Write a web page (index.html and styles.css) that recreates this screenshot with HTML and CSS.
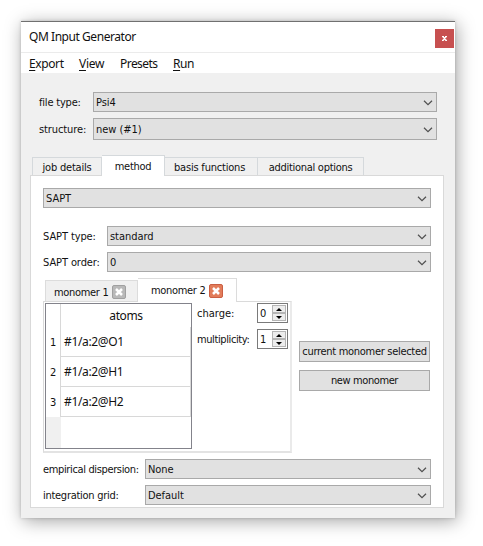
FILE: index.html
```
<!DOCTYPE html>
<html lang="en">
<head>
<meta charset="utf-8">
<title>QM Input Generator</title>
<link rel="stylesheet" href="styles.css">
</head>
<body>
<svg class="defs" width="0" height="0">
  <symbol id="chev" viewBox="0 0 10 6"><path d="M1 .8 5 4.7 9 .8" fill="none" stroke="#505050" stroke-width="1.2"/></symbol>
  <symbol id="cross" viewBox="0 0 14 14"><path d="M4 4 10 10M10 4 4 10" fill="none" stroke="#fff" stroke-width="2.5"/></symbol>
</svg>
<main class="window">
  <header class="titlebar"><h1>QM Input Generator</h1><button class="close" aria-label="Close"><svg width="5" height="5" viewBox="0 0 5 5"><path d="M0 .5H2M3 .5H5M0 4.5H2M3 4.5H5M1 .5 4 4.5M4 .5 1 4.5" fill="none" stroke="#fff" stroke-width="1.3"/></svg></button></header>
  <nav class="menu"><span class="m-export"><u>E</u>xport</span><span class="m-view"><u>V</u>iew</span><span class="m-presets">Presets</span><span class="m-run"><u>R</u>un</span></nav>
  <section class="content">
    <div class="row file"><label>file type:</label><div class="combo"><span>Psi4</span><svg><use href="#chev"/></svg></div></div>
    <div class="row structure"><label>structure:</label><div class="combo"><span>new (#1)</span><svg><use href="#chev"/></svg></div></div>
    <div class="tabs">
      <div class="tab job"><span>job details</span></div><div class="tab active method"><span>method</span></div><div class="tab basis"><span>basis functions</span></div><div class="tab options"><span>additional options</span></div>
    </div>
    <div class="pane">
      <div class="combo sapt"><span>SAPT</span><svg><use href="#chev"/></svg></div>
      <div class="row type"><label>SAPT type:</label><div class="combo"><span>standard</span><svg><use href="#chev"/></svg></div></div>
      <div class="row order"><label>SAPT order:</label><div class="combo"><span>0</span><svg><use href="#chev"/></svg></div></div>
      <div class="monomers">
        <div class="left">
          <div class="mtabs">
            <div class="mtab"><span>monomer 1</span><i class="x"><svg><use href="#cross"/></svg></i></div><div class="mtab current"><span>monomer 2</span><i class="x red"><svg><use href="#cross"/></svg></i></div>
          </div>
          <div class="mpane">
            <div class="table">
              <div class="num"></div><div class="head">atoms</div>
              <div class="num">1</div><div class="cell">#1/a:2@O1</div>
              <div class="num">2</div><div class="cell">#1/a:2@H1</div>
              <div class="num">3</div><div class="cell">#1/a:2@H2</div>
              <div class="num rest"></div><div></div>
            </div>
            <div class="fields">
              <div class="field"><label class="charge">charge:</label><div class="spin"><span>0</span><i><b class="up"></b><b class="down"></b></i></div></div>
              <div class="field"><label class="mult">multiplicity:</label><div class="spin"><span>1</span><i><b class="up"></b><b class="down"></b></i></div></div>
            </div>
          </div>
        </div>
        <div class="buttons"><button><span class="b-current">current monomer selected</span></button><button><span class="b-new">new monomer</span></button></div>
      </div>
      <div class="row disp"><label>empirical dispersion:</label><div class="combo"><span>None</span><svg><use href="#chev"/></svg></div></div>
      <div class="row grid"><label>integration grid:</label><div class="combo"><span>Default</span><svg><use href="#chev"/></svg></div></div>
    </div>
  </section>
</main>
</body>
</html>
```

FILE: styles.css
```
* { box-sizing: border-box; }
body { margin: 0; padding: 21px 0 0 21px; height: 546px; overflow: hidden; background: #fff; color: #111; font: 11px/14px "DejaVu Sans Condensed", "Noto Sans", sans-serif; letter-spacing: -.1px; white-space: nowrap; }
.defs { position: absolute; }
.window { width: 434px; height: 497px; background: #f0f0f0; border-top: 1px solid #707070; box-shadow: 2px 3px 17px rgba(0,0,0,.36), 0 0 3px rgba(0,0,0,.18); }
.titlebar { height: 31px; background: #fff; border-bottom: 1px solid #ebebeb; display: flex; justify-content: space-between; padding: 7px 1px 0 8px; }
h1 { margin: -1px 0 0; height: 17px; font: 12px/17px "Noto Sans", sans-serif; letter-spacing: -.45px; }
.close { width: 19px; height: 19px; border: 0; padding: 0; background: #c75050; display: grid; place-items: center; }
.menu { height: 20px; background: #fff; display: flex; padding-left: 8px; font: 12px/21px "Noto Sans", sans-serif; letter-spacing: -.4px; }
.menu u { text-underline-offset: 2px; text-decoration-skip-ink: none; }
.m-export { width: 50px; }
.m-view { width: 41px; letter-spacing: -.25px; }
.m-presets { width: 53px; letter-spacing: -.55px; }
.content { padding: 19px 11px 0 9px; }
.row { display: flex; align-items: center; }
.row label { padding-top: 2px; }
.file, .structure { padding: 0 7px 0 9px; }
.file label, .structure label { width: 54px; }
.file label { letter-spacing: -.2px; }
.file { height: 20px; margin-bottom: 6px; }
.structure { height: 22px; }
.structure .combo { height: 22px; }
.combo { flex: 1; height: 20px; border: 1px solid #a9a9a9; background: #e1e1e1; display: flex; align-items: center; justify-content: space-between; padding: 1px 3px 0 2px; letter-spacing: -.05px; }
.combo span { padding-top: 1px; }
.combo svg { width: 10px; height: 6px; }
.tabs { height: 20px; display: flex; align-items: flex-end; margin: 15px 0 0 2px; letter-spacing: -.2px; }
.tab { height: 18px; border: 1px solid #d5d9dc; border-bottom: 0; border-left: 0; display: grid; place-items: center; padding-top: 2px; }
.tab.active { position: relative; height: 21px; margin-bottom: -1px; background: #fff; letter-spacing: -.3px; }
.job { width: 70px; border-left: 1px solid #d5d9dc; }
.method { width: 63px; }
.basis { width: 93px; justify-items: start; padding-left: 9px; }
.options { width: 106px; letter-spacing: -.28px; }
.pane { height: 333px; background: #fff; border: 1px solid #d9d9d9; padding: 12px 12px 0; }
.sapt { width: 388px; }
.type { margin: 18px 0 6px; }
.type label, .order label { width: 64px; }
.monomers { display: flex; height: 175px; margin-top: 6px; }
.left { width: 249px; }
.mtabs { display: flex; align-items: flex-end; height: 23px; padding-left: 2px; letter-spacing: -.32px; }
.mtab { width: 93px; height: 21px; background: #f0f0f0; border: 1px solid #dcdcdc; border-bottom: 0; display: flex; align-items: center; padding: 2px 0 0 8px; }
.mtab span { width: 58px; padding-top: 1px; }
.mtab.current { width: 99px; height: 24px; background: #fff; margin-bottom: -1px; padding: 0 0 0 13px; position: relative; border-left: 0; }
.x { width: 14px; height: 14px; background: #b9b9b9; border: 1px solid #a0a0a0; border-radius: 2px; display: block; }
.x svg { width: 14px; height: 14px; margin: -1px; display: block; }
.x.red { background: #e27c5a; border-color: #cb5f43; }
.mpane { height: 152px; border: 1px solid #dadada; border-right: 2px solid #eaeaea; border-bottom: 2px solid #e3e3e3; display: flex; padding: 1px; }
.table { width: 147px; height: 146px; border: 1px solid #83838b; display: grid; grid-template-columns: 15px 130px; grid-template-rows: 23px 30px 30px 30px 31px; }
.table > * { display: grid; align-items: center; }
.num { border-right: 1px solid #d8d8d8; justify-items: center; padding-top: 2px; }
.rest { background: #f0f0f0; border-right-color: #f0f0f0; }
.head { justify-items: center; font: 12px/16px "Noto Sans", sans-serif; letter-spacing: -.4px; padding-top: 1px; }
.cell { border-bottom: 1px solid #d8d8d8; border-right: 1px solid #d8d8d8; padding-left: 3px; font: 12px/16px "Noto Sans", sans-serif; letter-spacing: -.35px; }
.fields { flex: 1; padding: 0 1px 0 5px; }
.field { height: 20px; margin-bottom: 6px; display: flex; justify-content: space-between; align-items: center; }
.field label { padding-top: 1px; }
.mult { letter-spacing: -.4px; }
.charge { letter-spacing: 0; }
.spin { width: 31px; height: 20px; border: 1px solid #7a7a7a; display: flex; justify-content: space-between; align-items: center; padding: 0 1px 0 2px; }
.spin span { padding-top: 2px; }
.spin i { width: 14px; height: 16px; display: grid; gap: 0; }
.spin b { border: 1px solid #b5b5b5; background: #ededed; display: grid; place-items: center; height: 8px; }
.spin b::after { content: ""; border: 3px solid transparent; border-top: 0; border-bottom: 3px solid #000; }
.spin .down::after { border-bottom: 0; border-top: 3px solid #000; }
.buttons { padding: 63px 0 0 7px; display: grid; align-content: start; gap: 8px; letter-spacing: -.3px; }
.buttons button { width: 131px; height: 21px; border: 1px solid #a9a9a9; background: #e1e1e1; color: inherit; font: inherit; letter-spacing: inherit; padding: 1px 0 0; display: grid; place-items: center; }
.b-new { letter-spacing: -.4px; }
.disp { margin: 6px 0; }
.disp label, .grid label { width: 102px; }
.disp label { letter-spacing: -.36px; }
.grid label { letter-spacing: -.28px; }
```
